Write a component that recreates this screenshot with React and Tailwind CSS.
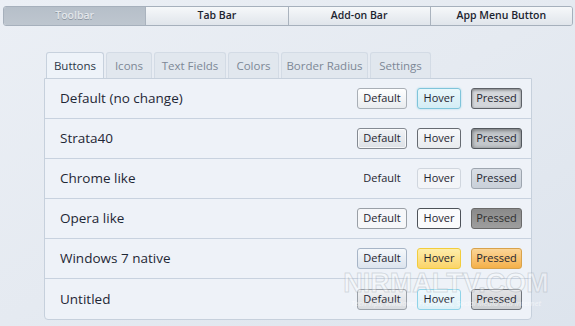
import React from 'react';

const segments = ['Toolbar', 'Tab Bar', 'Add-on Bar', 'App Menu Button'];
const tabs = [
  { t: 'Buttons', w: 'w-[58px]' },
  { t: 'Icons', w: 'w-[46px]' },
  { t: 'Text Fields', w: 'w-[72px]' },
  { t: 'Colors', w: 'w-[51px]' },
  { t: 'Border Radius', w: 'w-[87px]' },
  { t: 'Settings', w: 'w-[61px]' },
];

const rows = [
  {
    label: 'Default (no change)',
    d: 'border-[#a9afb6] bg-gradient-to-b from-[#ffffff] to-[#e9ecef]',
    h: 'border-[#7fc4da] bg-gradient-to-b from-[#e9f7fb] to-[#d3edf5] shadow-[0_0_2px_#9fd6e6]',
    p: 'border-[#5d6167] bg-[#d4d7db] shadow-[inset_0_1px_3px_rgba(0,0,0,0.45)]',
  },
  {
    label: 'Strata40',
    d: 'border-[#858b93] bg-gradient-to-b from-[#f1f3f6] to-[#dde1e6] shadow-[inset_0_0_0_1px_rgba(255,255,255,0.7)]',
    h: 'border-[#666b72] bg-gradient-to-b from-[#f7f8fa] to-[#e8ebee]',
    p: 'border-[#52575d] bg-[#c4c8cc] shadow-[inset_0_1px_4px_rgba(0,0,0,0.5)]',
  },
  {
    label: 'Chrome like',
    d: 'border-transparent bg-transparent',
    h: 'border-[#d0d6de] bg-[#f3f5f8]',
    p: 'border-[#9da5af] bg-gradient-to-b from-[#d9dee5] to-[#c9d0d9]',
  },
  {
    label: 'Opera like',
    d: 'border-[#9aa0a7] bg-[#f6f7f9]',
    h: 'border-[#4d5259] bg-[#fafbfc]',
    p: 'border-[#6a6a6a] bg-gradient-to-b from-[#8a8a8a] to-[#9e9e9e] text-[#2f2f2f]',
  },
  {
    label: 'Windows 7 native',
    d: 'border-[#a7b5c7] bg-gradient-to-b from-[#f5f8fb] to-[#dce4ee]',
    h: 'border-[#f2cd3c] bg-gradient-to-b from-[#fdedaa] to-[#fbd468]',
    p: 'border-[#d8a34c] bg-gradient-to-b from-[#fbd596] to-[#f4b048]',
  },
  {
    label: 'Untitled',
    d: 'border-[#9ba1a8] bg-gradient-to-b from-[#f1f2f4] to-[#d9dce0]',
    h: 'border-[#8fd3e8] bg-gradient-to-b from-[#eef8fc] to-[#dcf0f7]',
    p: 'border-[#6f747b] bg-gradient-to-b from-[#e2e3e5] to-[#cdd0d3]',
  },
];

function Btn({ cls, w, children }) {
  return (
    <div
      className={`h-[21px] ${w} flex items-center justify-center rounded-[3px] border text-[11px] text-[#1f2630] ${cls}`}
    >
      {children}
    </div>
  );
}

export default function App() {
  return (
    <div
      className="relative w-[575px] h-[326px] overflow-hidden bg-gradient-to-br from-[#ebeff5] via-[#e5eaf1] to-[#dde4ed] text-[#1e2735]"
      style={{ fontFamily: '"Open Sans", "Noto Sans", sans-serif' }}
    >
      {/* top segmented bar */}
      <div className="absolute left-[3px] top-[6px] flex h-[20px] w-[570px] overflow-hidden rounded-[3px] border border-[#a6b0bc]">
        {segments.map((s, i) => (
          <div
            key={s}
            className={`flex flex-1 items-center justify-center text-[10.5px] font-semibold ${
              i > 0 ? 'border-l border-[#aab3be]' : ''
            } ${
              i === 0
                ? 'bg-gradient-to-b from-[#b6bfc9] to-[#bec6cf] font-normal text-[#e3e7eb] [text-shadow:0_1px_0_#8e98a3]'
                : 'bg-gradient-to-b from-[#f6f8fa] to-[#e0e5eb] text-[#1c2430]'
            }`}
          >
            {s}
          </div>
        ))}
      </div>

      {/* tabs + panel */}
      <div className="absolute left-[44px] top-[52px] w-[488px]">
        <div className="flex gap-[2px] pl-[2px]">
          {tabs.map((t, i) => (
            <div
              key={t.t}
              className={`flex h-[26px] ${t.w} items-center justify-center rounded-t-[3px] border border-b-0 text-[11.5px] ${
                i === 0
                  ? 'border-[#c7d1dd] bg-[#eef3f9] text-[#2c3848]'
                  : 'border-[#d3dbe5] bg-[#e1e7ee] text-[#7d8896]'
              }`}
            >
              {t.t}
            </div>
          ))}
        </div>
        <div className="rounded-b-[4px] border border-[#c6d0dc] bg-[#eef2f8]">
          {rows.map((r, i) => (
            <div
              key={r.label}
              className={`flex h-[40px] items-center pl-[15px] pr-[9px] ${
                i < rows.length - 1 ? 'border-b border-[#c8d2df]' : ''
              }`}
            >
              <div className="flex-1 text-[13.5px]">{r.label}</div>
              <div className="flex items-center gap-[10px]">
                <Btn cls={r.d} w="w-[50px]">Default</Btn>
                <Btn cls={r.h} w="w-[44px]">Hover</Btn>
                <Btn cls={r.p} w="w-[51px]">Pressed</Btn>
              </div>
            </div>
          ))}
        </div>
      </div>

      {/* watermark */}
      <div className="pointer-events-none absolute left-[336px] top-[270px] w-[220px] text-center leading-none">
        <div
          className="text-[27px] font-bold text-white/35"
          style={{ fontFamily: '"Liberation Sans", sans-serif', WebkitTextStroke: '1px rgba(140,150,160,0.3)' }}
        >
          NIRMALTV.COM
        </div>
        <div className="mt-[3px] whitespace-nowrap text-[7.5px] italic text-white/55">
          Tech Tips, Windows, Freewares, Social Media and Internet
        </div>
      </div>
    </div>
  );
}
